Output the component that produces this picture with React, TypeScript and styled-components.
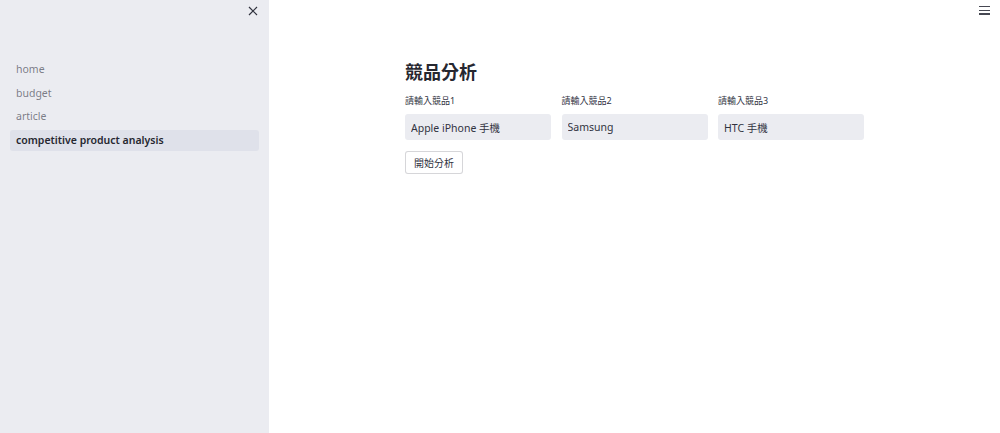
import React, { FC } from 'react';
import styled, { createGlobalStyle } from 'styled-components';

const Global = createGlobalStyle`
  html, body { margin: 0; padding: 0; height: 100%; }
  body {
    font-family: 'Noto Sans', 'Noto Sans CJK TC', sans-serif;
    color: rgb(49, 51, 63);
    background: #fff;
  }
  #root { height: 100%; }
`;

const Shell = styled.div`
  display: flex;
  width: 1000px;
  height: 433px;
  overflow: hidden;
`;

const Sidebar = styled.aside`
  position: relative;
  width: 269px;
  flex: none;
  background: #ebecf1;
  padding: 59px 10px 0 10px;
  box-sizing: border-box;
`;

const CloseButton = styled.button`
  position: absolute;
  top: 4px;
  right: 9px;
  width: 14px;
  height: 14px;
  padding: 0;
  border: none;
  background: transparent;
  color: rgb(49, 51, 63);
  display: flex;
  align-items: center;
  justify-content: center;
`;

const Nav = styled.nav`
  display: flex;
  flex-direction: column;
  gap: 2.5px;
`;

const NavItem = styled.a<{ $active?: boolean }>`
  display: block;
  height: 21px;
  line-height: 21px;
  padding: 0 6px;
  border-radius: 3px;
  font-size: 10.5px;
  text-decoration: none;
  color: ${p => (p.$active ? 'rgb(38, 39, 48)' : 'rgba(49, 51, 63, 0.62)')};
  font-weight: ${p => (p.$active ? 600 : 400)};
  background: ${p => (p.$active ? '#dfe1ea' : 'transparent')};
`;

const Main = styled.main`
  position: relative;
  flex: 1;
  padding: 57px 0 0 136px;
`;

const MenuButton = styled.button`
  position: absolute;
  top: 6px;
  right: 10px;
  padding: 0;
  border: none;
  background: transparent;
  display: flex;
  flex-direction: column;
  gap: 2.2px;
  > span {
    display: block;
    width: 11px;
    height: 1.4px;
    background: rgb(70, 72, 82);
  }
`;

const Title = styled.h1`
  margin: 0;
  font-family: 'Noto Sans CJK TC', sans-serif;
  font-size: 18px;
  font-weight: 700;
  line-height: 28px;
  color: rgb(38, 39, 48);
`;

const Row = styled.div`
  display: grid;
  grid-template-columns: repeat(3, 146px);
  column-gap: 10.5px;
  margin-top: 9px;
`;

const Field = styled.div`
  display: flex;
  flex-direction: column;
`;

const Label = styled.label`
  font-family: 'Noto Sans', 'Noto Sans CJK TC', sans-serif;
  font-size: 9px;
  line-height: 14px;
  height: 14px;
  margin-bottom: 6px;
  color: rgb(49, 51, 63);
`;

const Input = styled.input`
  box-sizing: border-box;
  height: 26px;
  width: 100%;
  border: none;
  border-radius: 3px;
  background: #ebecf1;
  padding: 0 6px;
  font-family: 'Noto Sans', 'Noto Sans CJK TC', sans-serif;
  font-size: 10.5px;
  color: rgb(49, 51, 63);
  outline: none;
`;

const Button = styled.button`
  margin-top: 11px;
  height: 23px;
  padding: 0 8px;
  border: 1px solid rgba(49, 51, 63, 0.2);
  border-radius: 3px;
  background: #fff;
  font-family: 'Noto Sans CJK TC', sans-serif;
  font-size: 10px;
  color: rgb(49, 51, 63);
`;

const pages = ['home', 'budget', 'article', 'competitive product analysis'];
const fields = [
  { label: '請輸入競品1', value: 'Apple iPhone 手機' },
  { label: '請輸入競品2', value: 'Samsung' },
  { label: '請輸入競品3', value: 'HTC 手機' }
];

const App: FC = () => (
  <Shell>
    <Global />
    <Sidebar>
      <CloseButton aria-label='close'>
        <svg width='10' height='10' viewBox='0 0 10 10'>
          <path d='M1 1L9 9M9 1L1 9' stroke='currentColor' strokeWidth='1.2' />
        </svg>
      </CloseButton>
      <Nav>
        {pages.map(p => (
          <NavItem key={p} $active={p === 'competitive product analysis'}>
            {p}
          </NavItem>
        ))}
      </Nav>
    </Sidebar>
    <Main>
      <MenuButton aria-label='menu'>
        <span />
        <span />
        <span />
      </MenuButton>
      <Title>競品分析</Title>
      <Row>
        {fields.map(f => (
          <Field key={f.label}>
            <Label>{f.label}</Label>
            <Input defaultValue={f.value} />
          </Field>
        ))}
      </Row>
      <div>
        <Button>開始分析</Button>
      </div>
    </Main>
  </Shell>
);

export default App;
